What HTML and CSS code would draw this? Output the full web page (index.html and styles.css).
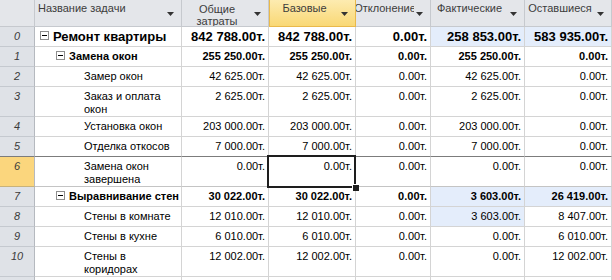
FILE: index.html
```html
<!DOCTYPE html>
<html lang="ru">
<head>
  <meta charset="UTF-8" />
  <title>Затраты</title>
  <link rel="stylesheet" href="styles.css">
</head>
<body>
  <div class="sheet">
    <div class="row head">
      <div class="hd"></div>
      <div class="hd"><div class="lbl left"><span>Название задачи</span></div><svg class="arr" width="7" height="4"><polygon points="0,0 7,0 3.5,4" /></svg></div>
      <div class="hd"><div class="lbl two"><span>Общие<br>затраты</span></div><svg class="arr" width="7" height="4"><polygon points="0,0 7,0 3.5,4" /></svg></div>
      <div class="hd on"><div class="lbl"><span>Базовые</span></div><svg class="arr" width="7" height="4"><polygon points="0,0 7,0 3.5,4" /></svg></div>
      <div class="hd"><div class="lbl"><span>Отклонение</span></div><svg class="arr" width="7" height="4"><polygon points="0,0 7,0 3.5,4" /></svg></div>
      <div class="hd"><div class="lbl"><span>Фактические</span></div><svg class="arr" width="7" height="4"><polygon points="0,0 7,0 3.5,4" /></svg></div>
      <div class="hd"><div class="lbl"><span>Оставшиеся</span></div><svg class="arr" width="7" height="4"><polygon points="0,0 7,0 3.5,4" /></svg></div>
    </div>

    <div class="row big">
      <div class="cell num">0</div>
      <div class="cell name l0"><span class="tog"></span><span>Ремонт квартиры</span></div>
      <div class="cell val">842 788.00т.</div>
      <div class="cell val">842 788.00т.</div>
      <div class="cell val">0.00т.</div>
      <div class="cell val chg">258 853.00т.</div>
      <div class="cell val chg">583 935.00т.</div>
    </div>

    <div class="row sum">
      <div class="cell num">1</div>
      <div class="cell name l1"><span class="tog"></span><span>Замена окон</span></div>
      <div class="cell val">255 250.00т.</div>
      <div class="cell val">255 250.00т.</div>
      <div class="cell val">0.00т.</div>
      <div class="cell val">255 250.00т.</div>
      <div class="cell val">0.00т.</div>
    </div>

    <div class="row">
      <div class="cell num">2</div>
      <div class="cell name l2"><span>Замер окон</span></div>
      <div class="cell val">42 625.00т.</div>
      <div class="cell val">42 625.00т.</div>
      <div class="cell val">0.00т.</div>
      <div class="cell val">42 625.00т.</div>
      <div class="cell val">0.00т.</div>
    </div>

    <div class="row tall">
      <div class="cell num">3</div>
      <div class="cell name l2"><span>Заказ и оплата окон</span></div>
      <div class="cell val">2 625.00т.</div>
      <div class="cell val">2 625.00т.</div>
      <div class="cell val">0.00т.</div>
      <div class="cell val">2 625.00т.</div>
      <div class="cell val">0.00т.</div>
    </div>

    <div class="row">
      <div class="cell num">4</div>
      <div class="cell name l2"><span>Установка окон</span></div>
      <div class="cell val">203 000.00т.</div>
      <div class="cell val">203 000.00т.</div>
      <div class="cell val">0.00т.</div>
      <div class="cell val">203 000.00т.</div>
      <div class="cell val">0.00т.</div>
    </div>

    <div class="row before-sel">
      <div class="cell num">5</div>
      <div class="cell name l2"><span>Отделка откосов</span></div>
      <div class="cell val">7 000.00т.</div>
      <div class="cell val">7 000.00т.</div>
      <div class="cell val">0.00т.</div>
      <div class="cell val">7 000.00т.</div>
      <div class="cell val">0.00т.</div>
    </div>

    <div class="row tall sel">
      <div class="cell num">6</div>
      <div class="cell name l2"><span>Замена окон завершена</span></div>
      <div class="cell val">0.00т.</div>
      <div class="cell val active">0.00т.</div>
      <div class="cell val">0.00т.</div>
      <div class="cell val">0.00т.</div>
      <div class="cell val">0.00т.</div>
    </div>

    <div class="row sum">
      <div class="cell num">7</div>
      <div class="cell name l1"><span class="tog"></span><span>Выравнивание стен</span></div>
      <div class="cell val">30 022.00т.</div>
      <div class="cell val">30 022.00т.</div>
      <div class="cell val">0.00т.</div>
      <div class="cell val chg">3 603.00т.</div>
      <div class="cell val chg">26 419.00т.</div>
    </div>

    <div class="row">
      <div class="cell num">8</div>
      <div class="cell name l2"><span>Стены в комнате</span></div>
      <div class="cell val">12 010.00т.</div>
      <div class="cell val">12 010.00т.</div>
      <div class="cell val">0.00т.</div>
      <div class="cell val chg">3 603.00т.</div>
      <div class="cell val">8 407.00т.</div>
    </div>

    <div class="row">
      <div class="cell num">9</div>
      <div class="cell name l2"><span>Стены в кухне</span></div>
      <div class="cell val">6 010.00т.</div>
      <div class="cell val">6 010.00т.</div>
      <div class="cell val">0.00т.</div>
      <div class="cell val">0.00т.</div>
      <div class="cell val">6 010.00т.</div>
    </div>

    <div class="row tall">
      <div class="cell num">10</div>
      <div class="cell name l2"><span>Стены в коридорах</span></div>
      <div class="cell val">12 002.00т.</div>
      <div class="cell val">12 002.00т.</div>
      <div class="cell val">0.00т.</div>
      <div class="cell val">0.00т.</div>
      <div class="cell val">12 002.00т.</div>
    </div>

    <div class="row last">
      <div class="cell num"></div>
      <div class="cell name"></div>
      <div class="cell val"></div>
      <div class="cell val"></div>
      <div class="cell val"></div>
      <div class="cell val"></div>
      <div class="cell val"></div>
    </div>
  </div>
</body>
</html>
```

FILE: styles.css
```css
body { margin: 0; background: #fff; color: #000; font-family: "Liberation Sans", Arial, sans-serif; font-size: 11px; overflow: hidden; }
.sheet { width: 612px; height: 280px; overflow: hidden; }
.row { display: grid; grid-template-columns: 35px 147px 87px 87px 75px 94px 87px; height: 20px; }
.row.tall { height: 30px; }
.row.head { height: 27px; }
.row.last { height: 3px; }

.hd { box-sizing: border-box; display: flex; background: #e4e6ea; color: #3c3c3c; border-right: 1px solid #c6c9ce; border-bottom: 1px solid #c6c9ce; line-height: 14px; padding-top: 1px; overflow: hidden; }
.hd.on { background: linear-gradient(#fdebb0, #f9d875); border: 1px solid #e9b94b; border-top: none; }
.lbl { flex: 1; display: flex; justify-content: center; overflow: hidden; text-align: center; }
.lbl span { white-space: nowrap; }
.lbl.two { line-height: 12px; padding-top: 2px; }
.lbl.left { justify-content: flex-start; padding-left: 3px; }
.arr { flex: none; margin: 11px 7px 0 2px; fill: #333; }

.cell { box-sizing: border-box; border-right: 1px solid #d4d4d4; border-bottom: 1px solid #d4d4d4; padding: 3px 3px 0; line-height: 13px; overflow: hidden; }
.val { text-align: right; white-space: nowrap; }
.chg { background: #e4edfb; }
.num { background: #dfe2e7; color: #3a3a3a; font-style: italic; text-align: center; border-color: #c5c9cf; border-right-color: #b5b9bf; }

.name { display: flex; align-items: flex-start; }
.name.l0 { padding-left: 5px; }
.name.l1 { padding-left: 21px; white-space: nowrap; }
.name.l2 { padding-left: 49px; padding-right: 2px; }
.tog { flex: none; position: relative; box-sizing: border-box; width: 9px; height: 9px; margin: 1px 4px 0 0; border: 1px solid #8e8e8e; background: #fff; }
.tog::after { content: ""; position: absolute; left: 1px; top: 3px; width: 5px; height: 1px; background: #000; }

.big .cell { font-weight: bold; font-size: 13px; line-height: 16px; padding-top: 2px; }
.big .cell.num { font-weight: normal; font-size: 11px; line-height: 13px; padding-top: 3px; }
.big .tog { margin-top: 2px; }
.sum .cell { font-weight: bold; }
.sum .cell.num { font-weight: normal; }

.before-sel .cell { border-bottom-color: #7c7c7c; }
.sel .cell { border-bottom-color: #c4c4c4; }
.sel .num { background: #fbd67d; border-bottom-color: #c8b27a; }
.active { position: relative; overflow: visible; }
.active::after { content: ""; position: absolute; left: -2px; top: -2px; right: -1px; bottom: -2px; border: 2px solid #1e1e1e; }
.active::before { content: ""; position: absolute; right: -4px; bottom: -5px; width: 6px; height: 6px; background: #1e1e1e; border-left: 1px solid #fff; border-top: 1px solid #fff; z-index: 1; }
```
